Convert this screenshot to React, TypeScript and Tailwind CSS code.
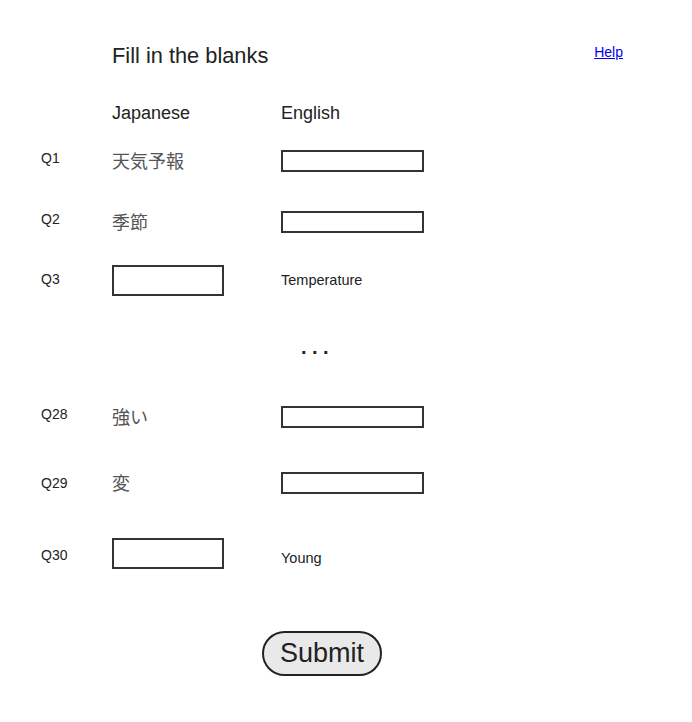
const rows = [
  { q: 'Q1', ja: '天気予報', en: null, mt: 'mt-[8px]', qc: 'mb-[5px]', ec: '' },
  { q: 'Q2', ja: '季節', en: null, mt: 'mt-[21px]', qc: 'mb-[5px]', ec: '' },
  { q: 'Q3', ja: null, en: 'Temperature', mt: 'mt-[18px]', qc: 'mb-[2px]', ec: '' },
];

const rows2 = [
  { q: 'Q28', ja: '強い', en: null, mt: 'mt-[27px]', qc: 'mb-[5px]', ec: '' },
  { q: 'Q29', ja: '変', en: null, mt: 'mt-[26px]', qc: '', ec: '' },
  { q: 'Q30', ja: null, en: 'Young', mt: 'mt-[30px]', qc: 'mt-[4px]', ec: 'mt-[10px]' },
];

type Row = { q: string; ja: string | null; en: string | null; mt: string; qc: string; ec: string };

function QuizRow({ row }: { row: Row }) {
  return (
    <div className={`flex h-[40px] items-center ${row.mt}`}>
      <div className={`w-[71px] text-[14px] text-[#222] ${row.qc}`}>{row.q}</div>
      <div className="w-[169px]">
        {row.ja ? (
          <span className="text-[18px] text-[#555]" style={{ fontFamily: '"Noto Sans CJK JP", sans-serif' }}>
            {row.ja}
          </span>
        ) : (
          <input type="text" className="block h-[31px] w-[112px] border-2 border-[#333] bg-white outline-none" />
        )}
      </div>
      <div className={row.ec}>
        {row.en ? (
          <span className="text-[14.5px] text-[#222]">{row.en}</span>
        ) : (
          <input type="text" className="block h-[22px] w-[143px] border-2 border-[#333] bg-white outline-none" />
        )}
      </div>
    </div>
  );
}

export default function App() {
  return (
    <div className="min-h-[722px] w-[692px] bg-white pl-[41px] pt-[36px]" style={{ fontFamily: '"Liberation Sans", Arial, sans-serif' }}>
      <div className="flex h-[40px] items-center">
        <h1 className="ml-[71px] text-[21.8px] text-[#222]">Fill in the blanks</h1>
        <a href="#" className="ml-auto mr-[69px] -mt-[8px] text-[14px] text-[#0000ee] underline">
          Help
        </a>
      </div>

      <div className="mt-[17px] flex h-[40px] items-center text-[18px] text-[#222]">
        <div className="w-[71px]" />
        <div className="w-[169px]">Japanese</div>
        <div>English</div>
      </div>

      {rows.map((r) => (
        <QuizRow key={r.q} row={r} />
      ))}

      <div className="mt-[30px] flex h-[40px] items-center">
        <div className="mb-[6px] ml-[260px] text-[20px] font-bold leading-none tracking-[5.5px] text-[#222]">...</div>
      </div>

      {rows2.map((r) => (
        <QuizRow key={r.q} row={r} />
      ))}

      <div className="mt-[58px] flex">
        <button className="ml-[221px] h-[45px] w-[120px] rounded-full border-2 border-[#222] bg-[#e9e9e9] text-[27px] text-[#222]">
          Submit
        </button>
      </div>
    </div>
  );
}
